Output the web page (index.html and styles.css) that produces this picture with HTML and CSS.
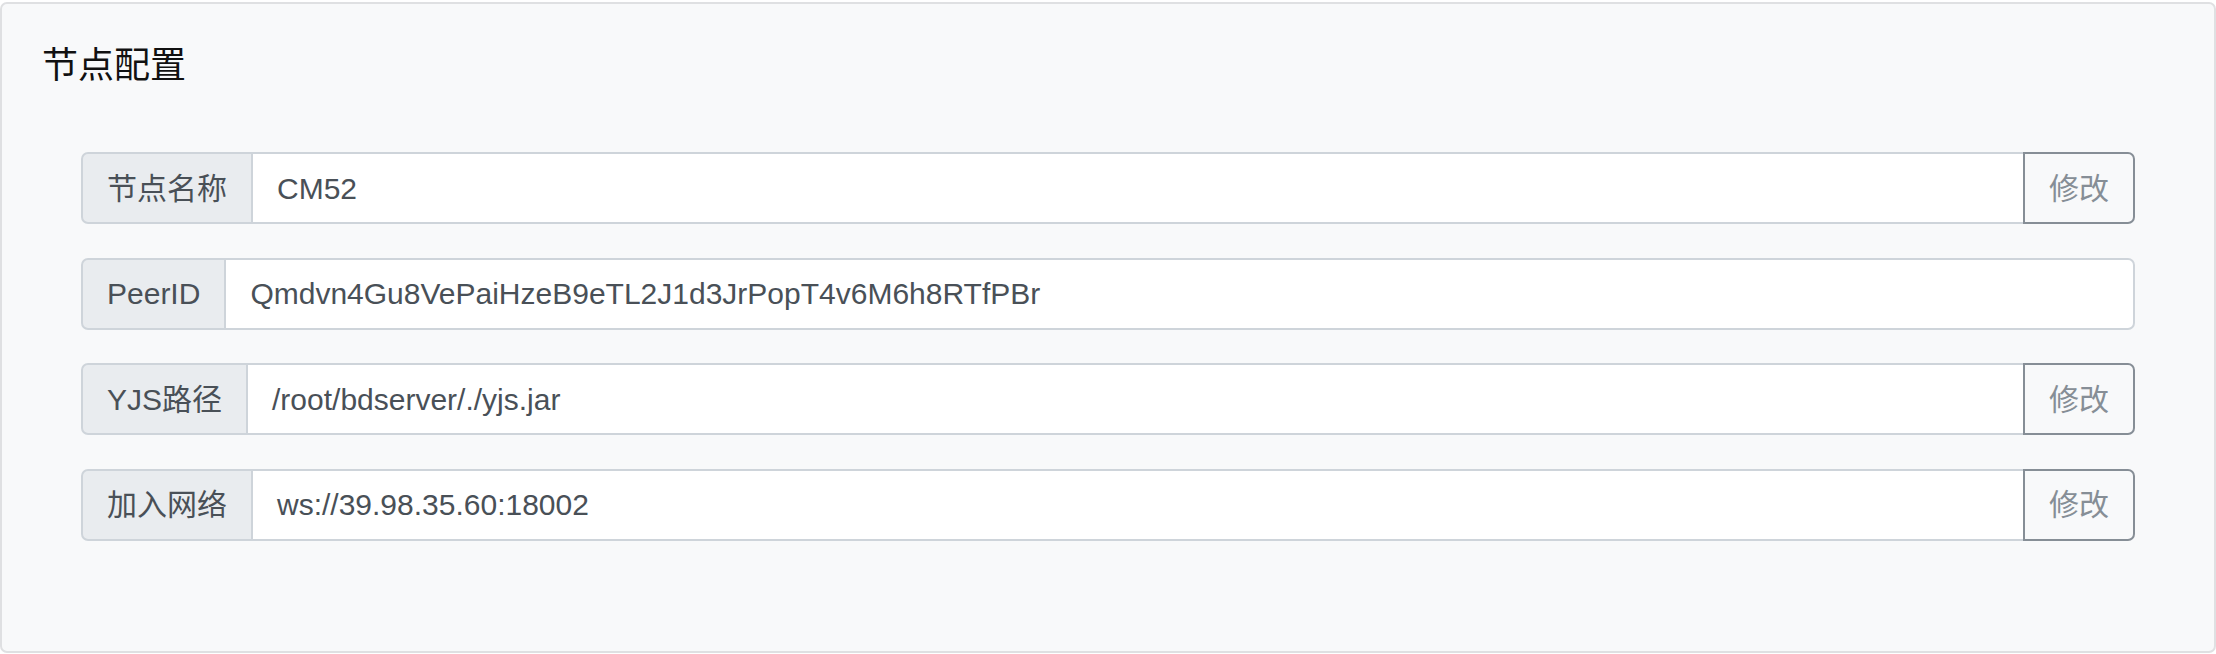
FILE: index.html
```html
<!DOCTYPE html>
<html lang="zh-CN">
<head>
<meta charset="utf-8">
<title>节点配置</title>
<link rel="stylesheet" href="styles.css">
</head>
<body>
<div class="card">
  <h4 class="card-title">节点配置</h4>
  <div class="rows">
    <div class="group">
      <div class="prepend">节点名称</div>
      <div class="field">CM52</div>
      <button class="btn">修改</button>
    </div>
    <div class="group">
      <div class="prepend">PeerID</div>
      <div class="field field-end">Qmdvn4Gu8VePaiHzeB9eTL2J1d3JrPopT4v6M6h8RTfPBr</div>
    </div>
    <div class="group">
      <div class="prepend">YJS路径</div>
      <div class="field">/root/bdserver/./yjs.jar</div>
      <button class="btn">修改</button>
    </div>
    <div class="group">
      <div class="prepend">加入网络</div>
      <div class="field">ws://39.98.35.60:18002</div>
      <button class="btn">修改</button>
    </div>
  </div>
</div>
</body>
</html>
```

FILE: styles.css
```css
html, body {
  margin: 0;
  padding: 0;
  background: #ffffff;
}
body {
  font-family: "Liberation Sans", Arial, "Noto Sans CJK SC", sans-serif;
  color: #212529;
}
.card {
  box-sizing: border-box;
  margin-top: 2px;
  height: 651px;
  background: #f8f9fa;
  border: 2px solid #dfe0e2;
  border-radius: 7px;
  padding: 40px 79px 0 40px;
}
.card-title {
  margin: 0;
  font-size: 36px;
  font-weight: 400;
  line-height: 1.2;
  color: #111;
}
.rows {
  margin-top: 65px;
  margin-left: 39px;
  display: flex;
  flex-direction: column;
  gap: 33.5px;
}
.group {
  display: flex;
  height: 72px;
  font-size: 30px;
  line-height: 45px;
}
.prepend {
  box-sizing: border-box;
  display: flex;
  align-items: center;
  padding: 0 24px;
  background: #e9ecef;
  border: 2px solid #ced4da;
  border-radius: 7px 0 0 7px;
  color: #495057;
  white-space: nowrap;
}
.field {
  box-sizing: border-box;
  flex: 1;
  display: flex;
  align-items: center;
  padding: 0 24px;
  margin-left: -2px;
  background: #fff;
  border: 2px solid #ced4da;
  color: #495057;
  white-space: nowrap;
}
.field-end {
  border-radius: 0 7px 7px 0;
}
.btn {
  box-sizing: border-box;
  margin-left: -2px;
  padding: 0 24px;
  background: transparent;
  border: 2px solid #868e96;
  border-radius: 0 7px 7px 0;
  color: #868e96;
  font-family: inherit;
  font-size: 30px;
  line-height: 45px;
  cursor: pointer;
}
```
